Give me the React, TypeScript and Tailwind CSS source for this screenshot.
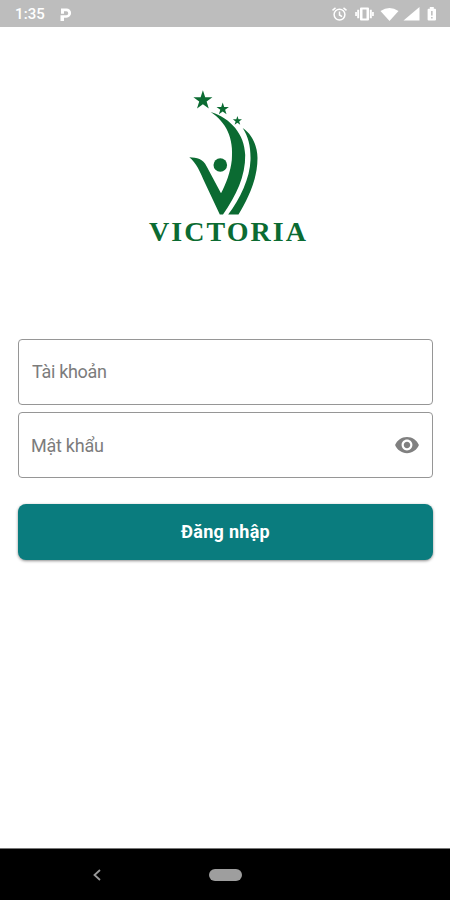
import React from "react";
import { MdVisibility } from "react-icons/md";

function star(cx: number, cy: number, r: number) {
  const points: string[] = [];
  for (let i = 0; i < 10; i++) {
    const radius = i % 2 === 0 ? r : r * 0.39;
    const angle = -Math.PI / 2 + (i * Math.PI) / 5;
    points.push(`${(cx + radius * Math.cos(angle)).toFixed(2)},${(cy + radius * Math.sin(angle)).toFixed(2)}`);
  }
  return points.join(" ");
}

function StatusBar() {
  return (
    <header className="flex h-[27px] items-center bg-[#bdbdbd] pt-[2px] pl-[15px] text-white">
      <span className="w-[44px] text-[15px] leading-none font-medium tracking-[0.1px]">1:35</span>
      <svg width="14" height="14" viewBox="0 0 14 14" fill="white" className="shrink-0">
        <path fillRule="evenodd" d="M2 .5H7.500A4.600 4.600 0 0 1 7.500 9.700H5V13H1.500V7.200H7.300A1.900 1.900 0 0 0 7.300 3.300H5V5.800H2Z" />
      </svg>
      <svg width="118" height="18" viewBox="0 0 118 18" className="mr-[8px] ml-auto shrink-0" fill="white">
        <g fill="none" stroke="white" strokeWidth="1.5">
          <circle cx="15.5" cy="8.6" r="5.4" />
          <path d="M15.500 5.500v3.500l2.600 1.600M8.500 4.300l3-2.500M22.500 4.300l-3-2.500" />
        </g>
        <path fillRule="evenodd" d="M37 1.500h7a1 1 0 0 1 1 1v11a1 1 0 0 1-1 1h-7a1 1 0 0 1-1-1v-11a1 1 0 0 1 1-1Zm1.500 2v9h4v-9Z" />
        <path d="M33.200 3.800h2v8.400h-2zM31.200 6h1.700v4h-1.700zM45.800 3.800h2v8.400h-2zM48.100 6h1.700v4h-1.700z" />
        <path d="M56.500 5Q65.500 -.8 74.500 5L65.500 15Z" />
        <path d="M95.500 1V14.500H79.500Z" />
        <path fillRule="evenodd" d="M105.800 2.700V1.100h4v1.600h1.200q1 0 1 1v9.900q0 1-1 1h-6.400q-1 0-1-1V3.700q0-1 1-1ZM107.100 4.900v4.700h1.500v-4.700Zm0 6v1.600h1.500v-1.600Z" />
      </svg>
    </header>
  );
}

function Logo() {
  return (
    <svg width="170" height="164" viewBox="143 84 170 164" fill="#0b6b32" role="img" aria-label="Victoria">
      <polygon points={star(202.9, 100.3, 10)} />
      <polygon points={star(222.7, 109, 6.5)} />
      <polygon points={star(237.4, 120.8, 4.8)} />
      <circle cx="220.3" cy="165" r="6.8" />
      <path d="M189.300 157.300C197 158 203 158.500 206.700 166.500L221 193.300C226 184 230.500 172 231.800 160C234 138 226 122 210.700 112C231 118.500 244.500 134 245.200 155C245.600 176 236 196 223 214.500H219.800L205 183C200 172 196.500 163 189.300 157.300Z" />
      <path d="M242.700 128C252 134 257.500 146 257.500 158C257.500 181 246.500 201 238.500 214.500H228.200C240 199 250 178 250.500 160C250.800 147 248.500 137 242.700 128Z" />
      <text
        x="149"
        y="241.300"
        textLength="157"
        lengthAdjust="spacing"
        className="font-['Liberation_Serif',serif] text-[28px] font-bold"
      >
        VICTORIA
      </text>
    </svg>
  );
}

export default function App() {
  return (
    <div className="flex h-[900px] w-[450px] flex-col overflow-hidden bg-white font-[Roboto,sans-serif]">
      <StatusBar />
      <main className="flex flex-1 flex-col pt-[57px] pr-[17px] pl-[18px]">
        <div className="flex justify-center pl-[5px]">
          <Logo />
        </div>
        <form className="mt-[91px] flex flex-col" onSubmit={(e) => e.preventDefault()}>
          <label className="flex h-[66px] items-center rounded-[4px] border border-[#969696] px-[13px] pb-[1px]">
            <input
              className="w-full text-[18px] tracking-[-0.3px] outline-none placeholder:text-[#7c7c7c]"
              placeholder="Tài khoản"
            />
          </label>
          <label className="mt-[7px] flex h-[66px] items-center rounded-[4px] border border-[#969696] px-[12px]">
            <input
              type="password"
              className="min-w-0 flex-1 text-[18px] tracking-[-0.25px] outline-none placeholder:text-[#7c7c7c]"
              placeholder="Mật khẩu"
            />
            <MdVisibility className="size-[26px] text-[#808080]" />
          </label>
          <button
            type="submit"
            className="mt-[26px] h-[56px] rounded-[8px] bg-[#0a7c7e] pb-[1px] text-[18px] font-bold tracking-[0.3px] text-white shadow-[0_1px_3px_rgba(0,0,0,0.45)]"
          >
            Đăng nhập
          </button>
        </form>
      </main>
      <nav className="flex h-[52px] items-center border-t border-[#777] bg-black pl-[92px]">
        <svg width="10" height="12" viewBox="0 0 10 12" fill="none" stroke="#999" strokeWidth="1.8">
          <path d="M8 1L2.500 6L8 11" />
        </svg>
        <span className="ml-[107px] h-[12px] w-[33px] rounded-full bg-[#9e9e9e]" />
      </nav>
    </div>
  );
}
